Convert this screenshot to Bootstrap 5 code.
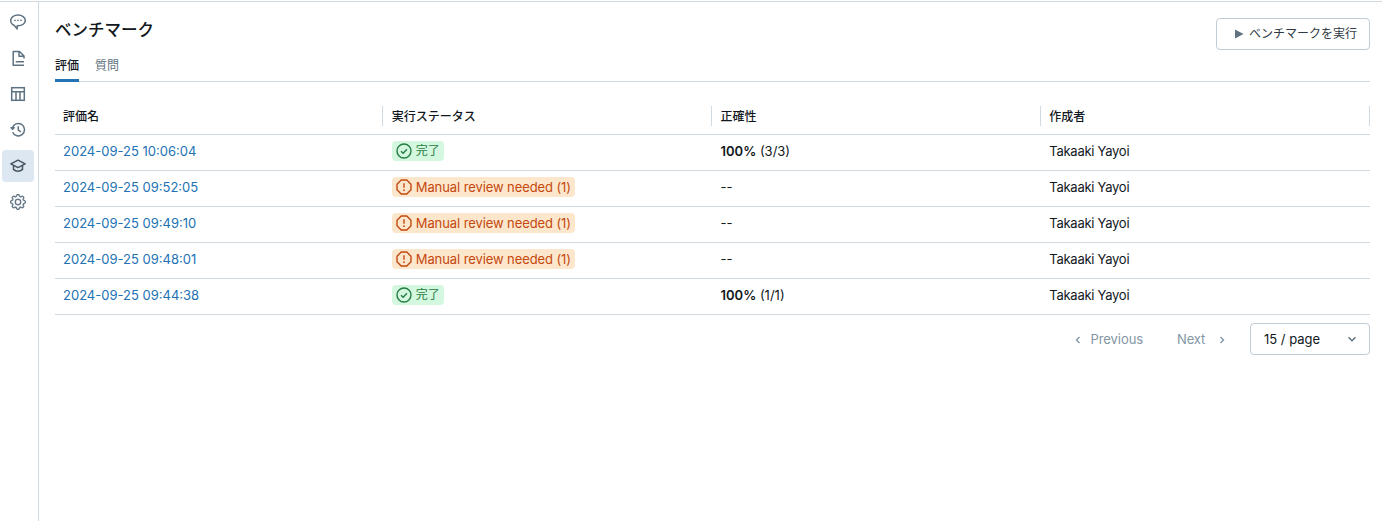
<!DOCTYPE html>
<html lang="ja">
<head>
<meta charset="utf-8">
<title>ベンチマーク</title>
<link href="https://cdn.jsdelivr.net/npm/bootstrap@5.3.0/dist/css/bootstrap.min.css" rel="stylesheet">
<style>
html,body{height:100%;}
body{font-family:Inter,"Noto Sans CJK JP",sans-serif;font-size:13px;color:#11171c;background:#fff;overflow:hidden;padding-top:1px;}
.app-shell{height:520px;border-top:1px solid #d1d9e1;}
.side-rail{width:39px;flex:none;border-right:1px solid #d1d9e1;padding:4px 0 0 2px;gap:4px;}
.rail-item{width:32px;height:32px;border-radius:4px;color:#5f7281;}
.rail-item.is-on{background:#dde7f1;color:#445461;}
.rail-item svg{width:16px;height:16px;display:block;}
.main-pane{padding:0 12px 0 16px;min-width:0;}
.page-title{font-size:16.5px;font-weight:500;line-height:24px;margin:0;padding-top:16px;color:#11171c;}
.run-btn{height:32px;margin-top:16px;padding:0 12px 0 17px;border:1px solid #c0cdd8;border-radius:4px;background:#fff;color:#2f3a44;font-size:12px;gap:5px;}
.tab-row{border-bottom:1px solid #d1d9e1;height:32px;gap:16px;}
.tab-link{height:31px;font-size:12px;line-height:20px;padding-top:6px;color:#5f7281;text-decoration:none;}
.tab-link.is-on{color:#11171c;font-weight:500;border-bottom:3px solid #2272b4;height:32px;}
.eval-table{table-layout:fixed;width:100%;margin:16px 0 0 0;--bs-table-color:#11171c;--bs-table-border-color:#d1d9e1;}
.eval-table th,.eval-table td{height:36px;padding:0 8px;vertical-align:middle;font-size:13px;border-bottom:1px solid #d1d9e1;}
.eval-table th{font-size:12px;font-weight:500;position:relative;padding-top:3px;}
.eval-table th::after{content:"";position:absolute;right:.5px;top:8px;height:20px;width:1px;background:#d1d9e1;}
.eval-table a{color:#2272b4;text-decoration:none;}
.owner-name{letter-spacing:-.26px;}
.state-chip{height:20px;border-radius:4px;padding:0 4px;gap:4px;font-size:13px;line-height:20px;letter-spacing:-.09px;vertical-align:middle;margin-top:-3px;}
.state-chip svg{width:16px;height:16px;flex:none;}
.chip-ok{background:#d4f7df;color:#277c43;font-size:12px;letter-spacing:0;}
.chip-warn{background:#fde7cc;color:#c4480f;}
.pager-row{margin-top:8px;}
.pager-btn{height:32px;color:#8396a5;font-size:13px;padding:2px 12px 0;letter-spacing:-.05px;}
.pager-prev{gap:8px;margin-right:10px;}
.pager-next{gap:13px;letter-spacing:-.2px;}
.pager-btn svg{width:8px;height:8px;}
.size-pick{width:120px;height:32px;border:1px solid #c0cdd8;border-radius:4px;margin-left:12px;padding:1px 12px 0 13px;color:#11171c;}
.size-pick span{padding-top:1px;}
.size-pick svg{width:10px;height:10px;color:#5f7281;}
.gear-mark{stroke:currentColor;stroke-width:.35;}
</style>
</head>
<body>
<div class="app-shell d-flex">
  <nav class="side-rail d-flex flex-column align-items-start">
    <div class="rail-item d-flex align-items-center justify-content-center">
      <svg viewBox="0 0 16 16" fill="none" stroke="currentColor" stroke-width="1.5"><path d="M8 1c4 0 7.300 2.300 7.300 5.400S12 11.800 8 11.800h-.8V15l-3.100-3.700C2 10.500.7 8.600.7 6.400.7 3.300 4 1 8 1z" stroke-linejoin="round"/><circle cx="5" cy="6.400" r=".8" fill="currentColor" stroke="none"/><circle cx="8" cy="6.400" r=".8" fill="currentColor" stroke="none"/><circle cx="11" cy="6.400" r=".8" fill="currentColor" stroke="none"/></svg>
    </div>
    <div class="rail-item d-flex align-items-center justify-content-center">
      <svg viewBox="0 0 16 16" fill="none" stroke="currentColor" stroke-width="1.500"><path d="M14 8.500V6L9.500 1.500H3.200V15.200H14M9 1.500V6.300h5M5.700 11.700H14" stroke-linejoin="round"/></svg>
    </div>
    <div class="rail-item d-flex align-items-center justify-content-center">
      <svg viewBox="0 0 16 16" fill="none" stroke="currentColor" stroke-width="1.500"><rect x="1.700" y="1.700" width="12.600" height="12.600"/><path d="M1.700 5.700h12.600M6 5.700v8.600M10 5.700v8.600"/></svg>
    </div>
    <div class="rail-item d-flex align-items-center justify-content-center">
      <svg viewBox="0 0 16 16" fill="none" stroke="currentColor" stroke-width="1.500"><path d="M2.600 10.200A6.200 6.200 0 1 0 2.300 6M.6 5.300l2 2 2-2M8.300 4.200v4l2.600 1.600"/></svg>
    </div>
    <div class="rail-item is-on d-flex align-items-center justify-content-center">
      <svg viewBox="0 0 16 16" fill="none" stroke="currentColor" stroke-width="1.500"><path d="M8 2.200 .9 5.900 8 9.600l7.100-3.700z" stroke-linejoin="round"/><path d="M3.500 7.600v3.800c1.200 1.200 2.900 1.900 4.500 1.900s3.300-.7 4.500-1.900V7.600"/></svg>
    </div>
    <div class="rail-item d-flex align-items-center justify-content-center">
      <svg class="gear-mark" viewBox="0 0 16 16" fill="currentColor"><path d="M8 4.754a3.246 3.246 0 1 0 0 6.492 3.246 3.246 0 0 0 0-6.492zM5.754 8a2.246 2.246 0 1 1 4.492 0 2.246 2.246 0 0 1-4.492 0z"/><path d="M9.796 1.343c-.527-1.790-3.065-1.790-3.592 0l-.094.319a.873.873 0 0 1-1.255.52l-.292-.16c-1.640-.892-3.433.902-2.540 2.541l.159.292a.873.873 0 0 1-.52 1.255l-.319.094c-1.790.527-1.790 3.065 0 3.592l.319.094a.873.873 0 0 1 .52 1.255l-.16.292c-.892 1.640.901 3.434 2.541 2.540l.292-.159a.873.873 0 0 1 1.255.52l.094.319c.527 1.790 3.065 1.790 3.592 0l.094-.319a.873.873 0 0 1 1.255-.52l.292.16c1.640.893 3.434-.902 2.540-2.541l-.159-.292a.873.873 0 0 1 .52-1.255l.319-.094c1.790-.527 1.790-3.065 0-3.592l-.319-.094a.873.873 0 0 1-.52-1.255l.16-.292c.893-1.640-.902-3.433-2.541-2.540l-.292.159a.873.873 0 0 1-1.255-.52l-.094-.319zm-2.633.283c.246-.835 1.428-.835 1.674 0l.094.319a1.873 1.873 0 0 0 2.693 1.115l.291-.16c.764-.415 1.600.42 1.184 1.185l-.159.292a1.873 1.873 0 0 0 1.116 2.692l.318.094c.835.246.835 1.428 0 1.674l-.319.094a1.873 1.873 0 0 0-1.115 2.693l.16.291c.415.764-.42 1.600-1.185 1.184l-.291-.159a1.873 1.873 0 0 0-2.693 1.116l-.094.318c-.246.835-1.428.835-1.674 0l-.094-.319a1.873 1.873 0 0 0-2.692-1.115l-.292.16c-.764.415-1.600-.42-1.184-1.185l.159-.291A1.873 1.873 0 0 0 1.945 8.930l-.319-.094c-.835-.246-.835-1.428 0-1.674l.319-.094A1.873 1.873 0 0 0 3.060 4.377l-.16-.292c-.415-.764.42-1.600 1.185-1.184l.292.159a1.873 1.873 0 0 0 2.692-1.115l.094-.319z"/></svg>
    </div>
  </nav>
  <main class="main-pane flex-grow-1">
    <div class="d-flex justify-content-between align-items-start">
      <h1 class="page-title">ベンチマーク</h1>
      <button type="button" class="run-btn d-flex align-items-center">
        <svg width="10" height="10" viewBox="0 0 10 10"><path d="M1 .6 9.500 5 1 9.400z" fill="#5f7281"/></svg>
        <span>ベンチマークを実行</span>
      </button>
    </div>
    <div class="tab-row d-flex">
      <a class="tab-link is-on" href="#">評価</a>
      <a class="tab-link" href="#">質問</a>
    </div>
    <table class="table eval-table">
      <thead>
        <tr><th>評価名</th><th>実行ステータス</th><th>正確性</th><th>作成者</th></tr>
      </thead>
      <tbody>
        <tr><td><a href="#">2024-09-25 10:06:04</a></td><td><span class="state-chip chip-ok d-inline-flex align-items-center"><svg viewBox="0 0 16 16" fill="none" stroke="currentColor" stroke-width="1.400"><circle cx="8" cy="8" r="7"/><path d="m5 8.200 2.100 2.100L11 6.200"/></svg>完了</span></td><td><strong class="fw-semibold">100%</strong> (3/3)</td><td class="owner-name">Takaaki Yayoi</td></tr>
        <tr><td><a href="#">2024-09-25 09:52:05</a></td><td><span class="state-chip chip-warn d-inline-flex align-items-center"><svg viewBox="0 0 16 16" fill="none" stroke="currentColor" stroke-width="1.400"><path d="M5.200 1h5.600L15 5.200v5.600L10.800 15H5.200L1 10.800V5.200z" stroke-linejoin="round"/><path d="M8 4.300v4.500"/><circle cx="8" cy="11.200" r=".9" fill="currentColor" stroke="none"/></svg>Manual review needed (1)</span></td><td>--</td><td class="owner-name">Takaaki Yayoi</td></tr>
        <tr><td><a href="#">2024-09-25 09:49:10</a></td><td><span class="state-chip chip-warn d-inline-flex align-items-center"><svg viewBox="0 0 16 16" fill="none" stroke="currentColor" stroke-width="1.400"><path d="M5.200 1h5.600L15 5.200v5.600L10.800 15H5.200L1 10.800V5.200z" stroke-linejoin="round"/><path d="M8 4.300v4.500"/><circle cx="8" cy="11.200" r=".9" fill="currentColor" stroke="none"/></svg>Manual review needed (1)</span></td><td>--</td><td class="owner-name">Takaaki Yayoi</td></tr>
        <tr><td><a href="#">2024-09-25 09:48:01</a></td><td><span class="state-chip chip-warn d-inline-flex align-items-center"><svg viewBox="0 0 16 16" fill="none" stroke="currentColor" stroke-width="1.400"><path d="M5.200 1h5.600L15 5.200v5.600L10.800 15H5.200L1 10.800V5.200z" stroke-linejoin="round"/><path d="M8 4.300v4.500"/><circle cx="8" cy="11.200" r=".9" fill="currentColor" stroke="none"/></svg>Manual review needed (1)</span></td><td>--</td><td class="owner-name">Takaaki Yayoi</td></tr>
        <tr><td><a href="#">2024-09-25 09:44:38</a></td><td><span class="state-chip chip-ok d-inline-flex align-items-center"><svg viewBox="0 0 16 16" fill="none" stroke="currentColor" stroke-width="1.400"><circle cx="8" cy="8" r="7"/><path d="m5 8.200 2.100 2.100L11 6.200"/></svg>完了</span></td><td><strong class="fw-semibold">100%</strong> (1/1)</td><td class="owner-name">Takaaki Yayoi</td></tr>
      </tbody>
    </table>
    <div class="pager-row d-flex justify-content-end align-items-center">
      <div class="pager-btn pager-prev d-flex align-items-center"><svg viewBox="0 0 8 8" fill="none" stroke="currentColor" stroke-width="1.400"><path d="M5.500 1 2.500 4l3 3"/></svg>Previous</div>
      <div class="pager-btn pager-next d-flex align-items-center">Next<svg viewBox="0 0 8 8" fill="none" stroke="currentColor" stroke-width="1.400"><path d="m2.500 1 3 3-3 3"/></svg></div>
      <div class="size-pick d-flex align-items-center justify-content-between"><span>15 / page</span><svg viewBox="0 0 10 10" fill="none" stroke="currentColor" stroke-width="1.400"><path d="m1.500 3.200 3.500 3.500 3.500-3.500"/></svg></div>
    </div>
  </main>
</div>
<script src="https://cdn.jsdelivr.net/npm/bootstrap@5.3.0/dist/js/bootstrap.bundle.min.js"></script>
</body>
</html>
